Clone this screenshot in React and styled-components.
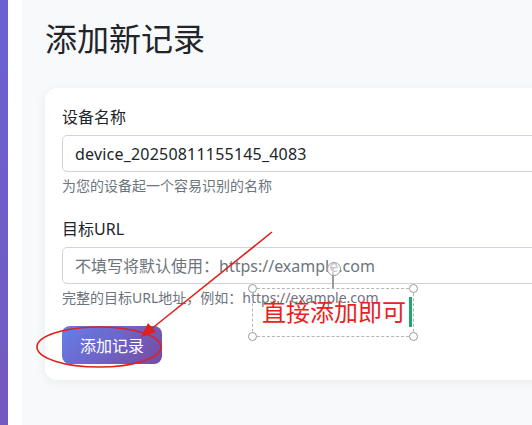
import React from "react";
import styled, { createGlobalStyle } from "styled-components";

const GlobalStyle = createGlobalStyle`
    html, body {
        margin:0;
        padding:0;
    }
    body {
        font-family:"Noto Sans", "Noto Sans CJK SC", sans-serif;
        background:#fff;
    }
    * {
        box-sizing:border-box;
    }
`;

const Page = styled.div`
    position:relative;
    display:flex;
    width:532px;
    height:425px;
    overflow:hidden;
`;
const Sidebar = styled.div`
    flex:0 0 8px;
    background:linear-gradient(to bottom, #6a62d2 0, #7459c0 100%);
`;
const Gutter = styled.div`
    flex:0 0 14px;
    background:#fff;
`;
const Main = styled.main`
    flex:1 1;
    padding:16px 0 0 23px;
    background:#f8f9fb;
    overflow:hidden;
`;
const Title = styled.h1`
    margin:0 0 27px;
    font-size:32px;
    font-weight:400;
    line-height:45px;
    color:#212529;
`;
const Card = styled.section`
    width:640px;
    padding:18px 17px 16px;
    border-radius:12px;
    background:#fff;
    box-shadow:0 2px 12px rgba(0, 0, 0, 0.06);
`;
const Field = styled.div`
    margin-bottom:${props => props.$last ? "19px" : "23px"};
`;
const Label = styled.label`
    display:block;
    margin-bottom:7px;
    font-size:16px;
    line-height:22px;
    color:#212529;
`;
const Input = styled.input`
    display:block;
    width:100%;
    height:37px;
    padding:0 12px;
    border:1px solid #ced4da;
    border-radius:5px;
    font-family:inherit;
    font-size:16px;
    letter-spacing:0.2px;
    color:#212529;
    background:#fff;
    outline:none;
    &::placeholder {
        color:#6c757d;
        letter-spacing:0;
    }
`;
const Hint = styled.p`
    margin:4px 0 0;
    font-size:14px;
    line-height:19px;
    color:#6c757d;
`;
const SubmitButton = styled.button`
    display:block;
    height:38px;
    padding:0 18px;
    border:none;
    border-radius:8px;
    background:linear-gradient(135deg, #667eea 0, #764ba2 100%);
    font-family:inherit;
    font-size:16px;
    color:#fff;
    cursor:pointer;
`;

// 标注层
const Markup = styled.svg`
    position:absolute;
    left:0;
    top:0;
    pointer-events:none;
`;
const NoteBox = styled.div`
    position:absolute;
    left:252px;
    top:288px;
    width:162px;
    height:49px;
    border:1.5px dashed #b5b5b5;
`;
const NoteText = styled.span`
    position:absolute;
    left:9px;
    top:6px;
    display:flex;
    align-items:center;
    font-size:24px;
    line-height:34px;
    color:#e8231f;
    white-space:nowrap;
    &::after {
        content:"";
        width:2.5px;
        height:30px;
        margin-left:3px;
        background:#1aa86b;
    }
`;
const Handle = styled.span`
    position:absolute;
    width:9px;
    height:9px;
    border:1.5px solid #9a9a9a;
    border-radius:50%;
    background:#fff;
    ${props => props.$top ? "top:-5px;" : "bottom:-5px;"}
    ${props => props.$left ? "left:-5px;" : "right:-5px;"}
`;
const RotateHandle = styled.span`
    position:absolute;
    left:50%;
    top:-21px;
    width:2px;
    height:20px;
    margin-left:-1px;
    background:#9a9a9a;
    &::before {
        content:"";
        position:absolute;
        left:-5px;
        top:-6px;
        width:12px;
        height:12px;
        border:1.5px solid #9a9a9a;
        border-radius:50%;
        background:rgba(255, 255, 255, 0.6);
    }
`;

function App(){
    return (
        <>
            <GlobalStyle />
            <Page>
                <Sidebar />
                <Gutter />
                <Main>
                    <Title>添加新记录</Title>
                    <Card>
                        <Field>
                            <Label>设备名称</Label>
                            <Input defaultValue="device_20250811155145_4083" />
                            <Hint>为您的设备起一个容易识别的名称</Hint>
                        </Field>
                        <Field $last>
                            <Label>目标URL</Label>
                            <Input placeholder="不填写将默认使用：https://example.com" />
                            <Hint>完整的目标URL地址，例如：https://example.com</Hint>
                        </Field>
                        <SubmitButton type="button">添加记录</SubmitButton>
                    </Card>
                </Main>

                <Markup width="532" height="425" viewBox="0 0 532 425">
                    <ellipse cx="99" cy="347" rx="62" ry="20" fill="none" stroke="#e0201c" strokeWidth="1.6" />
                    <line x1="272" y1="232" x2="150" y2="330" stroke="#e0201c" strokeWidth="1.6" />
                    <polygon points="141,337 148,323 156,332" fill="#e0201c" />
                </Markup>

                <NoteBox>
                    <RotateHandle />
                    <Handle $top $left />
                    <Handle $top />
                    <Handle $left />
                    <Handle />
                    <NoteText>直接添加即可</NoteText>
                </NoteBox>
            </Page>
        </>
    )
}

export default App;
